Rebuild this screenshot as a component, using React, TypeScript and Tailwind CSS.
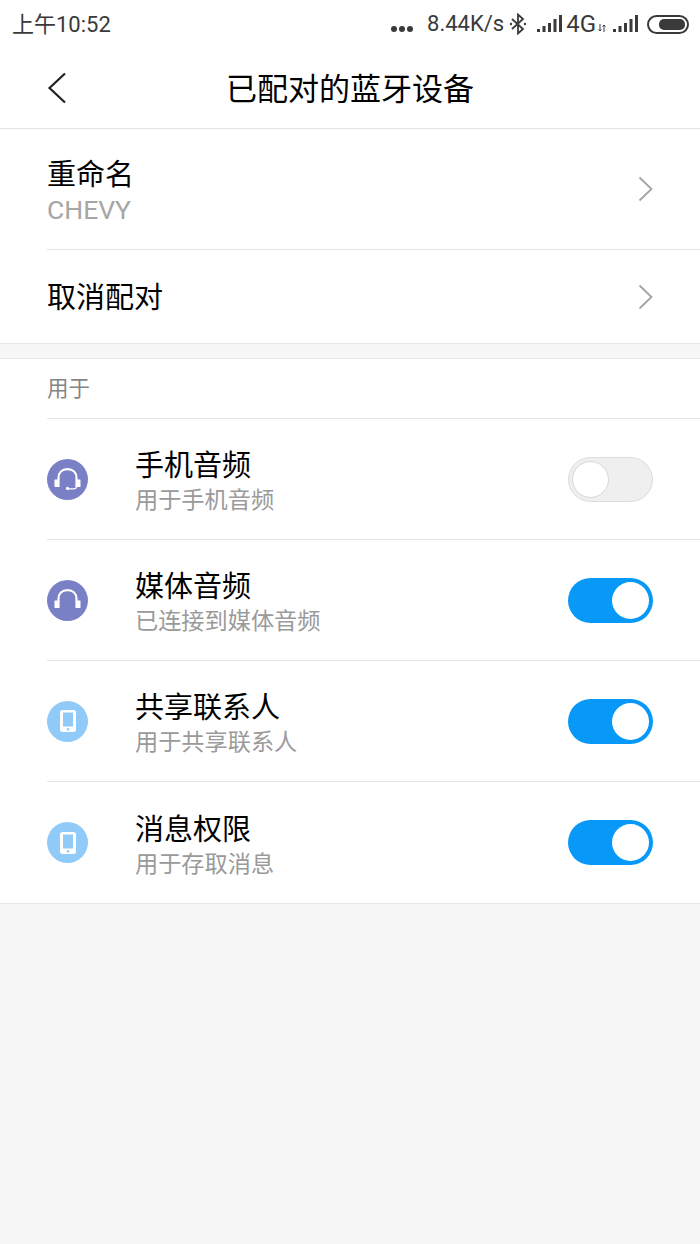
import React from "react";

const Chevron = () => (
  <svg width="15" height="26" viewBox="0 0 15 26" fill="none" stroke="#a3a3a3" strokeWidth="1.8">
    <path d="M1.5 1.5 L13.5 13 L1.5 24.5" />
  </svg>
);

const Signal = () => (
  <svg width="26" height="18" viewBox="0 0 26 18" fill="#3a3a3a">
    <rect x="0" y="14" width="3" height="3" />
    <rect x="5.5" y="11" width="3" height="6" />
    <rect x="11" y="8" width="3" height="9" />
    <rect x="16.5" y="4" width="3" height="13" />
    <rect x="22" y="0" width="3" height="17" />
  </svg>
);

const HeadsetIcon = ({ mic }: { mic?: boolean }) => (
  <div className="w-[41px] h-[41px] rounded-full bg-[#7a80c6] flex items-center justify-center shrink-0">
    <svg width="27" height="22" viewBox="0 0 27 22" fill="none">
      <path d="M4.5 19 V10 C4.5 4.5 8 1.2 13.5 1.2 C19 1.2 22.5 4.5 22.5 10 V19" stroke="#fff" strokeWidth="2.2" />
      <rect x="0.5" y="11.5" width="3.5" height="7.5" rx="0.6" fill="#fff" />
      <rect x="23" y="11.5" width="3.5" height="7.5" rx="0.6" fill="#fff" />
      {mic && <path d="M22.5 19 C22.5 20.4 21 20.8 19 20.8 H14" stroke="#fff" strokeWidth="1.2" />}
      {mic && <circle cx="13.5" cy="20.4" r="1.6" fill="#fff" />}
    </svg>
  </div>
);

const PhoneIcon = () => (
  <div className="w-[41px] h-[41px] rounded-full bg-[#90caf9] flex items-center justify-center shrink-0">
    <svg width="16" height="22" viewBox="0 0 16 22">
      <rect x="0" y="0" width="16" height="22" rx="2.5" fill="#fff" />
      <rect x="3" y="2.5" width="10" height="14" fill="#90caf9" />
      <circle cx="8" cy="19.2" r="1.2" fill="#90caf9" />
    </svg>
  </div>
);

const Toggle = ({ on }: { on: boolean }) =>
  on ? (
    <div className="w-[85px] h-[45px] rounded-full bg-[#0798f8] flex items-center justify-end pr-[4px] shrink-0">
      <div className="w-[37px] h-[37px] rounded-full bg-white" />
    </div>
  ) : (
    <div className="w-[85px] h-[45px] rounded-full bg-[#efefef] border border-[#dcdcdc] flex items-center pl-[3px] shrink-0">
      <div className="w-[37px] h-[37px] rounded-full bg-white border border-[#d6d6d6]" />
    </div>
  );

const rows = [
  { t: "手机音频", s: "用于手机音频", icon: <HeadsetIcon mic />, on: false },
  { t: "媒体音频", s: "已连接到媒体音频", icon: <HeadsetIcon />, on: true },
  { t: "共享联系人", s: "用于共享联系人", icon: <PhoneIcon />, on: true },
  { t: "消息权限", s: "用于存取消息", icon: <PhoneIcon />, on: true },
];

export default function App() {
  return (
    <div
      className="w-[700px] h-[1244px] bg-[#f7f7f7] overflow-hidden flex flex-col"
      style={{ fontFamily: '"Roboto", "Noto Sans CJK SC", sans-serif' }}
    >
      <div className="bg-white h-[48px] flex items-center justify-between pl-[12px] pr-[11px] text-[#3a3a3a] shrink-0">
        <span className="text-[22px] leading-none mt-[1px]">上午10:52</span>
        <div className="flex items-center">
          <div className="flex gap-[2px] mr-[14px] mt-[10px]">
            <span className="w-[6px] h-[6px] rounded-full bg-[#3a3a3a]" />
            <span className="w-[6px] h-[6px] rounded-full bg-[#3a3a3a]" />
            <span className="w-[6px] h-[6px] rounded-full bg-[#3a3a3a]" />
          </div>
          <span className="text-[22px] leading-none">8.44K/s</span>
          <svg className="ml-[5px] mr-[10px]" width="18" height="22" viewBox="0 0 18 22" fill="none" stroke="#3a3a3a" strokeWidth="1.8">
            <path d="M3 6 L14 16 L9 20.5 V1.5 L14 6 L3 16" />
            <circle cx="2" cy="11" r="1.2" fill="#3a3a3a" stroke="none" />
            <circle cx="16" cy="11" r="1.2" fill="#3a3a3a" stroke="none" />
          </svg>
          <Signal />
          <span className="text-[24px] leading-none ml-[3px]">4G</span>
          <svg className="self-end mb-[4px] ml-[2px]" width="8" height="8" viewBox="0 0 8 8" fill="none" stroke="#3a3a3a" strokeWidth="1">
            <path d="M2 0 V7 M0.5 5.5 L2 7 L3.5 5.5 M6 8 V1 M4.5 2.5 L6 1 L7.5 2.5" />
          </svg>
          <span className="ml-[7px]"><Signal /></span>
          <div className="ml-[8px] w-[42px] h-[19px] rounded-full border-2 border-[#3a3a3a] flex items-center justify-end pr-[2px]">
            <div className="w-[26px] h-[11px] rounded-[5px] bg-[#3a3a3a]" />
          </div>
        </div>
      </div>

      <div className="bg-white h-[81px] flex items-center relative border-b border-[#e3e3e3] shrink-0">
        <svg className="ml-[47px]" width="20" height="32" viewBox="0 0 20 32" fill="none" stroke="#222" strokeWidth="2.2">
          <path d="M18 1.5 L2.5 16 L18 30.5" />
        </svg>
        <span className="absolute left-0 right-0 top-[2px] bottom-0 flex items-center justify-center text-[31px] leading-none text-black">已配对的蓝牙设备</span>
      </div>

      <div className="bg-white border-b border-[#e6e6e6] shrink-0">
        <div className="h-[121px] ml-[47px] pr-[47px] flex items-center justify-between border-b border-[#e3e3e3]">
          <div className="flex flex-col pt-[6px]">
            <span className="text-[29px] leading-[36px] text-black">重命名</span>
            <span className="text-[26.5px] leading-[34px] text-[#a6a6a6]">CHEVY</span>
          </div>
          <Chevron />
        </div>
        <div className="h-[93px] ml-[47px] pr-[47px] flex items-center justify-between">
          <span className="text-[29px] leading-none text-black pt-[3px]">取消配对</span>
          <Chevron />
        </div>
      </div>

      <div className="h-[14px] shrink-0" />

      <div className="bg-white border-y border-[#e6e6e6] shrink-0">
        <div className="h-[60px] ml-[47px] pt-[1px] flex items-center border-b border-[#e3e3e3] text-[21.5px] text-[#858585]">
          用于
        </div>
        {rows.map((r, i) => (
          <div
            key={r.t}
            className={
              i < rows.length - 1
                ? "h-[121px] ml-[47px] pr-[47px] flex items-center border-b border-[#e3e3e3]"
                : "h-[121px] ml-[47px] pr-[47px] flex items-center"
            }
          >
            <div className="w-[88px] shrink-0">{r.icon}</div>
            <div className="flex flex-col flex-1 pt-[7px]">
              <span className="text-[29px] leading-[36px] text-black">{r.t}</span>
              <span className="text-[23.2px] leading-[34px] -mt-[1px] text-[#9a9a9a]">{r.s}</span>
            </div>
            <Toggle on={r.on} />
          </div>
        ))}
      </div>
    </div>
  );
}
